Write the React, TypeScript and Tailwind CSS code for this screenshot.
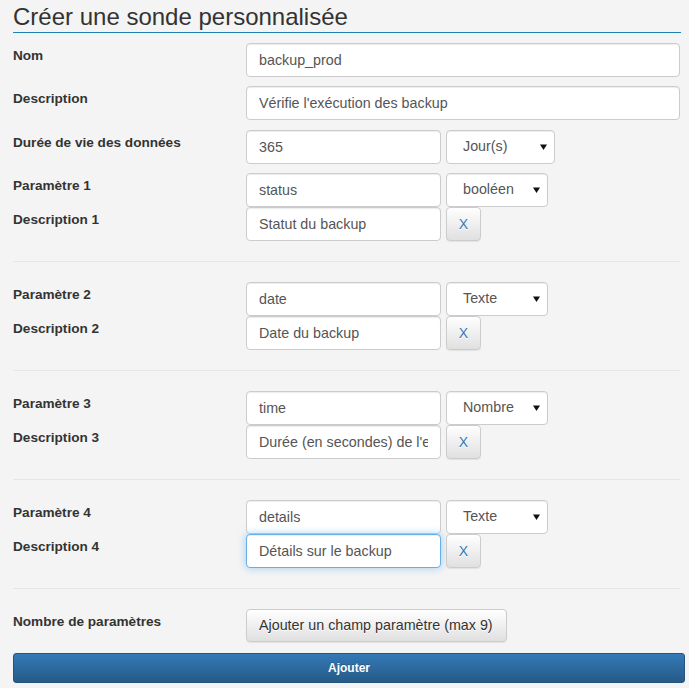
import React from "react";

const inputCls =
  "h-[34px] rounded-[4px] border border-[#ccc] bg-white px-3 text-[14.3px] text-[#555] shadow-[inset_0_1px_1px_rgba(0,0,0,0.075)] outline-none";

const focusCls =
  "h-[34px] rounded-[4px] border border-[#66afe9] bg-white px-3 text-[14.3px] text-[#555] shadow-[inset_0_1px_1px_rgba(0,0,0,0.075),0_0_8px_rgba(102,175,233,0.6)] outline-none";

const Label = ({ children }: { children: React.ReactNode }) => (
  <div className="w-[233px] shrink-0 pt-[3px] text-[13.6px] font-bold leading-5 text-[#333]">
    {children}
  </div>
);

const Select = ({ value, width }: { value: string; width: string }) => (
  <div
    className={`${width} flex h-[34px] items-center justify-between rounded-[4px] border border-[#ccc] bg-white pl-[16px] pr-[7px] text-[14.3px] text-[#555] shadow-[inset_0_1px_1px_rgba(0,0,0,0.075)]`}
  >
    <span>{value}</span>
    <svg width="7" height="6" viewBox="0 0 7 6">
      <path d="M0 0.5 L7 0.5 L3.5 6 Z" fill="#111" />
    </svg>
  </div>
);

const XButton = () => (
  <button className="h-[34px] w-[35px] rounded-[4px] border border-[#ccc] bg-gradient-to-b from-white to-[#e0e0e0] text-[14px] text-[#337ab7] shadow-[0_1px_1px_rgba(0,0,0,0.075)] [text-shadow:0_1px_0_#fff]">
    X
  </button>
);

type Param = { n: number; name: string; type: string; desc: string; focus?: boolean };

const params: Param[] = [
  { n: 1, name: "status", type: "booléen", desc: "Statut du backup" },
  { n: 2, name: "date", type: "Texte", desc: "Date du backup" },
  { n: 3, name: "time", type: "Nombre", desc: "Durée (en secondes) de l'exécution" },
  { n: 4, name: "details", type: "Texte", desc: "Détails sur le backup", focus: true },
];

const Hr = () => <div className="my-[20px] mr-[5px] h-px bg-[#e6e6e6]" />;

export default function App() {
  return (
    <div
      className="min-h-[688px] w-full bg-[#f4f4f4] pl-[13px] pr-[4px]"
      style={{ fontFamily: '"Liberation Sans", Arial, sans-serif' }}
    >
      <h1 className="mr-[4px] border-b border-[#1f80b2] pt-[2px] text-[24px] font-normal leading-[30px] text-[#333]">
        Créer une sonde personnalisée
      </h1>

      <div className="mt-[10px] flex">
        <Label>Nom</Label>
        <input className={`${inputCls} w-[434px]`} defaultValue="backup_prod" readOnly />
      </div>

      <div className="mt-[9px] flex">
        <Label>Description</Label>
        <input
          className={`${inputCls} w-[434px]`}
          defaultValue="Vérifie l'exécution des backup"
          readOnly
        />
      </div>

      <div className="mt-[10px] flex">
        <Label>Durée de vie des données</Label>
        <div className="flex gap-[5px]">
          <input className={`${inputCls} w-[195px]`} defaultValue="365" readOnly />
          <Select value="Jour(s)" width="w-[109px]" />
        </div>
      </div>

      <div className="mt-[9px]">
        {params.map((p, i) => (
          <div key={p.n}>
            {i > 0 && <Hr />}
            <div className="flex">
              <Label>Paramètre {p.n}</Label>
              <div className="flex gap-[5px]">
                <input className={`${inputCls} w-[195px]`} defaultValue={p.name} readOnly />
                <Select value={p.type} width="w-[102px]" />
              </div>
            </div>
            <div className="flex">
              <Label>Description {p.n}</Label>
              <div className="flex gap-[5px]">
                <input
                  className={`${p.focus ? focusCls : inputCls} w-[195px]`}
                  defaultValue={p.desc}
                  readOnly
                />
                <XButton />
              </div>
            </div>
          </div>
        ))}
      </div>

      <Hr />

      <div className="flex">
        <Label>Nombre de paramètres</Label>
        <button className="h-[33px] w-[261px] rounded-[4px] border border-[#ccc] bg-gradient-to-b from-white to-[#e0e0e0] px-3 text-left text-[14.3px] text-[#333] shadow-[0_1px_1px_rgba(0,0,0,0.075)] [text-shadow:0_1px_0_#fff]">
          Ajouter un champ paramètre (max 9)
        </button>
      </div>

      <button className="mt-[11px] mr-[4px] block h-[30px] w-[672px] rounded-[3px] border border-[#245580] bg-gradient-to-b from-[#337ab7] to-[#265a88] text-[12px] font-bold text-white [text-shadow:0_-1px_0_rgba(0,0,0,0.2)]">
        Ajouter
      </button>
    </div>
  );
}
